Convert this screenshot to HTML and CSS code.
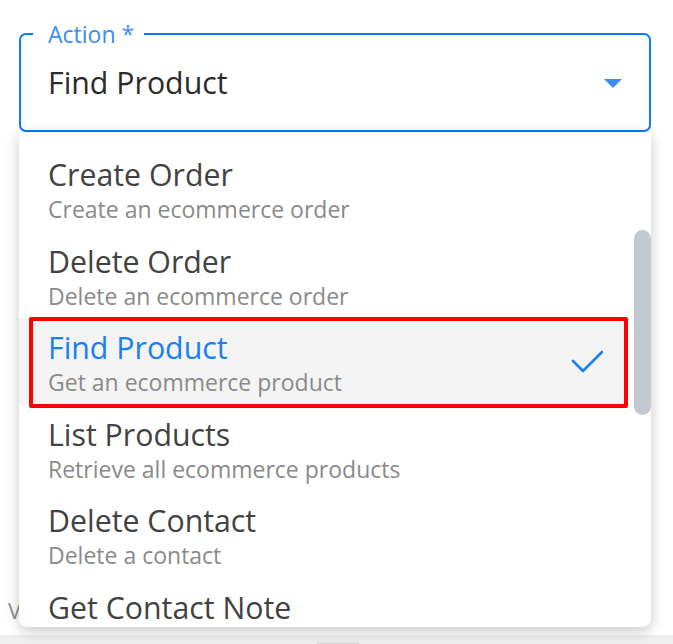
FILE: index.html
```html
<!DOCTYPE html>
<html lang="en">
<head>
<meta charset="utf-8">
<title>Action select</title>
<link rel="stylesheet" href="styles.css">
</head>
<body>
<div class="page">
  <div class="field-wrap">
    <fieldset class="field">
      <legend class="field-label">Action *</legend>
      <div class="field-row">
        <span class="field-value">Find Product</span>
        <span class="caret"></span>
      </div>
    </fieldset>
    <div class="menu">
      <ul class="menu-list">
        <li class="option">
          <div class="option-text">
            <div class="option-title">Create Order</div>
            <div class="option-desc">Create an ecommerce order</div>
          </div>
        </li>
        <li class="option">
          <div class="option-text">
            <div class="option-title">Delete Order</div>
            <div class="option-desc">Delete an ecommerce order</div>
          </div>
        </li>
        <li class="option option-selected">
          <div class="option-text">
            <div class="option-title">Find Product</div>
            <div class="option-desc">Get an ecommerce product</div>
          </div>
          <svg class="check" width="32" height="24" viewBox="0 0 32 24" aria-hidden="true">
            <path d="M2 12 L12 22 L31 3" fill="none" stroke="#1a7ff5" stroke-width="2.6" stroke-linecap="round" stroke-linejoin="round"/>
          </svg>
        </li>
        <li class="option">
          <div class="option-text">
            <div class="option-title">List Products</div>
            <div class="option-desc">Retrieve all ecommerce products</div>
          </div>
        </li>
        <li class="option">
          <div class="option-text">
            <div class="option-title">Delete Contact</div>
            <div class="option-desc">Delete a contact</div>
          </div>
        </li>
        <li class="option">
          <div class="option-text">
            <div class="option-title">Get Contact Note</div>
          </div>
        </li>
      </ul>
      <div class="scroll-thumb"></div>
    </div>
  </div>
  <div class="below">
    <span class="below-text">V</span>
  </div>
  <div class="footer"><span class="footer-handle"></span></div>
</div>
</body>
</html>
```

FILE: styles.css
```css
* {
  box-sizing: border-box;
}

html, body {
  margin: 0;
  padding: 0;
  background: #ffffff;
}

body {
  font-family: "Open Sans", "Noto Sans", "Liberation Sans", sans-serif;
  color: #3e3e3e;
}

.page {
  height: 644px;
  display: flex;
  flex-direction: column;
  overflow: hidden;
}

.field-wrap {
  position: relative;
  margin: 0 22px 0 19px;
  padding-top: 22px;
}

.field {
  margin: 0;
  padding: 0 27px;
  border: 2px solid #0a7bfb;
  border-radius: 7px;
  height: 110px;
  min-width: 0;
}

.field-label {
  margin-left: -15px;
  padding: 0 10px 0 15px;
  font-size: 23px;
  line-height: 24px;
  color: #3a8cf6;
}

.field-row {
  height: 84px;
  padding-bottom: 10px;
  display: flex;
  align-items: center;
  justify-content: space-between;
}

.field-value {
  font-size: 30.3px;
  line-height: 36px;
  color: #2b2b2b;
}

.caret {
  width: 0;
  height: 0;
  border-left: 9px solid transparent;
  border-right: 9px solid transparent;
  border-top: 9px solid #3a8cf6;
}

.menu {
  position: absolute;
  top: 100%;
  left: 0;
  right: 0;
  height: 495px;
  background: #ffffff;
  border-radius: 0 0 8px 8px;
  box-shadow: 0 4px 14px rgba(0, 0, 0, 0.22);
  overflow: hidden;
  z-index: 2;
}

.menu-list {
  list-style: none;
  margin: 0;
  padding: 13px 23px 0 0;
}

.option {
  position: relative;
  display: flex;
  align-items: center;
  justify-content: space-between;
  height: 86.5px;
  padding: 0 25px 0 29px;
}

.option-text {
  display: flex;
  flex-direction: column;
  align-self: flex-start;
  padding-top: 11px;
}

.option-title {
  font-size: 30.3px;
  line-height: 37px;
  color: #424242;
}

.option-desc {
  font-size: 23px;
  line-height: 28px;
  color: #8a8a8a;
  margin-top: 2px;
}

.option-selected {
  background: #f4f4f4;
}

.option-selected .option-title {
  color: #1a7ff5;
}

.option-selected::after {
  content: "";
  position: absolute;
  left: 10px;
  top: -1px;
  right: 0;
  bottom: -3px;
  border: 4px solid #ff0000;
  border-radius: 2px;
}

.check {
  display: block;
}

.scroll-thumb {
  position: absolute;
  right: 0;
  top: 98px;
  width: 17px;
  height: 185px;
  border-radius: 9px;
  background: #c3c9d1;
}

.below {
  flex: 1;
  display: flex;
  align-items: flex-end;
  padding: 0 0 12px 8px;
}

.below-text {
  font-size: 22px;
  line-height: 26px;
  color: #8f8f8f;
}

.footer {
  height: 9px;
  background: #efefef;
  display: flex;
  justify-content: flex-start;
  align-items: flex-end;
  padding-left: 317px;
}

.footer-handle {
  width: 42px;
  height: 2px;
  background: #dcdcdc;
}
```
